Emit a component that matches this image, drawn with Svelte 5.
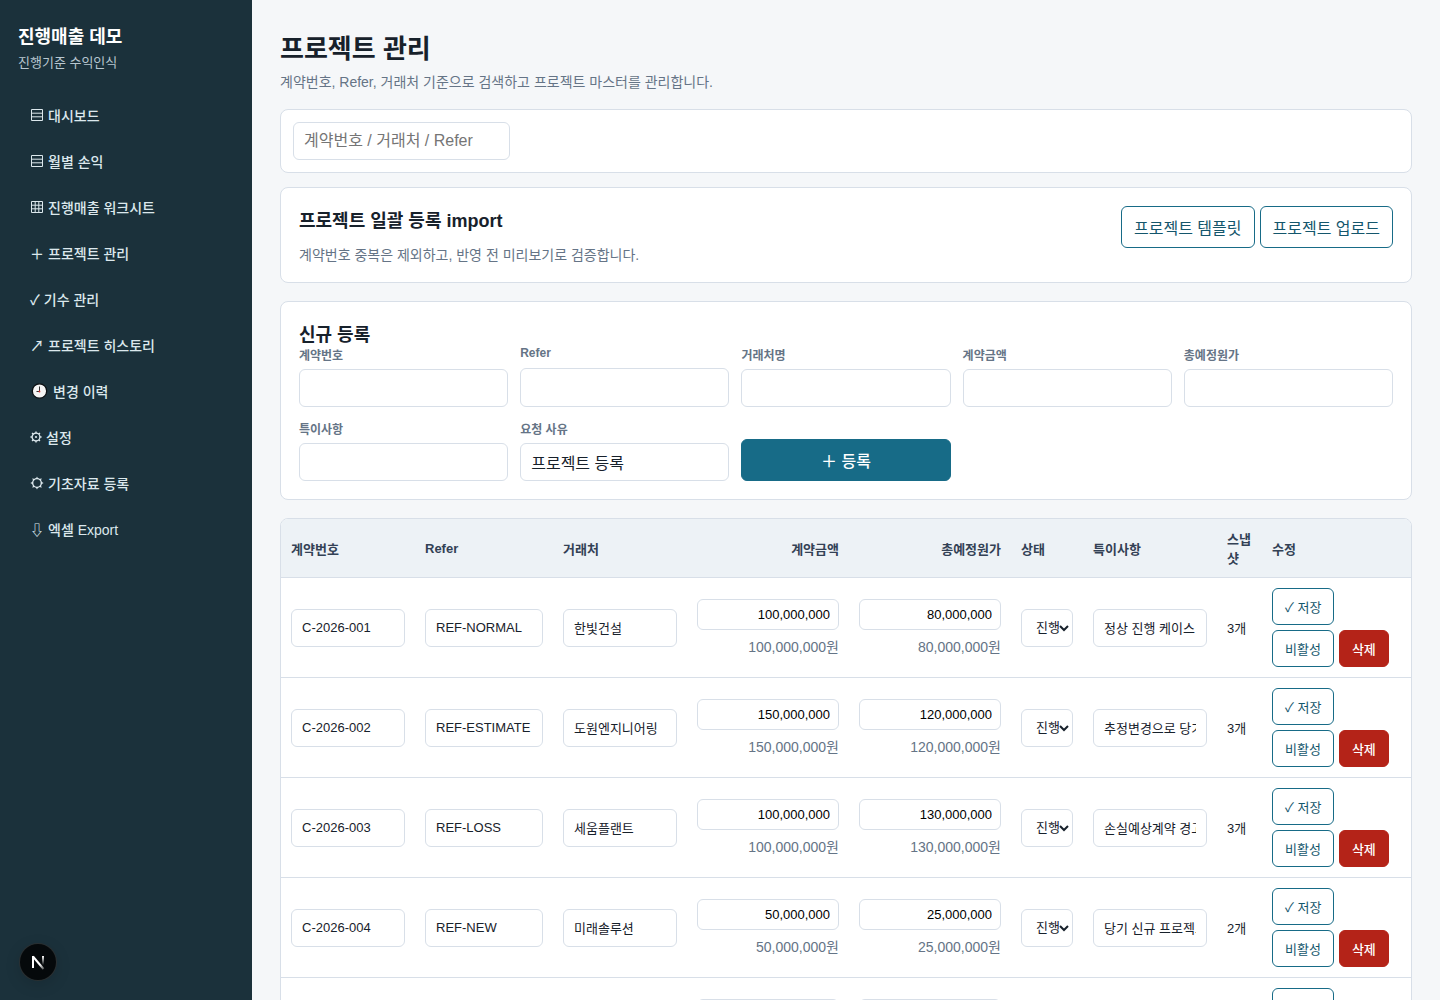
<script>
    const menu = [
        { icon: "list", label: "대시보드" },
        { icon: "list", label: "월별 손익" },
        { icon: "grid", label: "진행매출 워크시트" },
        { icon: "＋", label: "프로젝트 관리" },
        { icon: "✓", label: "기수 관리" },
        { icon: "↗", label: "프로젝트 히스토리" },
        { icon: "clock", label: "변경 이력" },
        { icon: "gear", label: "설정" },
        { icon: "sun", label: "기초자료 등록" },
        { icon: "⇩", label: "엑셀 Export" },
    ];

    const fields = [
        { id: "contractNo", label: "계약번호", value: "" },
        { id: "refer", label: "Refer", value: "" },
        { id: "client", label: "거래처명", value: "" },
        { id: "amount", label: "계약금액", value: "" },
        { id: "cost", label: "총예정원가", value: "" },
        { id: "note", label: "특이사항", value: "" },
        { id: "reason", label: "요청 사유", value: "프로젝트 등록" },
    ];

    const projects = [
        { no: "C-2026-001", refer: "REF-NORMAL", client: "한빛건설", amount: "100,000,000", cost: "80,000,000", note: "정상 진행 케이스", snapshots: 3 },
        { no: "C-2026-002", refer: "REF-ESTIMATE", client: "도원엔지니어링", amount: "150,000,000", cost: "120,000,000", note: "추정변경으로 당기 조정", snapshots: 3 },
        { no: "C-2026-003", refer: "REF-LOSS", client: "세움플랜트", amount: "100,000,000", cost: "130,000,000", note: "손실예상계약 경고", snapshots: 3 },
        { no: "C-2026-004", refer: "REF-NEW", client: "미래솔루션", amount: "50,000,000", cost: "25,000,000", note: "당기 신규 프로젝트", snapshots: 2 },
        { no: "C-2026-005", refer: "REF-DONE", client: "대한테크", amount: "70,000,000", cost: "50,000,000", note: "완료 프로젝트", snapshots: 3 },
    ];

    const spokes = [0, 45, 90, 135, 180, 225, 270, 315];
</script>

<div class="shell">
    <aside>
        <div class="brand">진행매출 데모</div>
        <div class="brand_sub">진행기준 수익인식</div>
        <nav>
            {#each menu as item}
                <a href="#top">
                    {#if item.icon == "list"}
                        <svg width="14" height="14" viewBox="0 0 14 14" fill="none" stroke="currentColor">
                            <path d="M1.5 1.5h11v11h-11z" />
                            <path d="M2 5.2h10M2 8.8h10" />
                        </svg>
                    {:else if item.icon == "grid"}
                        <svg width="14" height="14" viewBox="0 0 14 14" fill="none" stroke="currentColor">
                            <path d="M1.5 1.5h11v11h-11z" />
                            <path d="M2 5.2h10M2 8.8h10M5.2 2v10M8.8 2v10" />
                        </svg>
                    {:else if item.icon == "clock"}
                        <svg width="19" height="16" viewBox="0 0 19 16">
                            <circle cx="9.5" cy="8" r="7.2" fill="#f4f4f4" stroke="#0b0f12" stroke-width="1.3" />
                            <path d="M9.5 3.5V8.5H6.5" fill="none" stroke="#333" stroke-width="1" />
                            <circle cx="9.5" cy="8.5" r="0.9" fill="#d33" />
                        </svg>
                    {:else if item.icon == "gear"}
                        <svg width="12" height="14" viewBox="0 0 12 14" fill="none" stroke="currentColor">
                            <circle cx="6" cy="7" r="3.9" stroke-width="1.3" />
                            <circle cx="6" cy="7" r="1.1" fill="currentColor" stroke="none" />
                            {#each spokes as angle}
                                <path d="M6 3.2V1.4" stroke-width="1.4" transform="rotate({angle} 6 7)" />
                            {/each}
                        </svg>
                    {:else if item.icon == "sun"}
                        <svg width="14" height="14" viewBox="0 0 14 14" fill="none" stroke="currentColor">
                            <circle cx="7" cy="7" r="4.3" stroke-width="1.3" />
                            {#each spokes as angle}
                                <path d="M5.6 3L7 0.4L8.4 3z" fill="currentColor" stroke="none" transform="rotate({angle} 7 7)" />
                            {/each}
                        </svg>
                    {:else}
                        <span>{item.icon}</span>
                    {/if}
                    {item.label}
                </a>
            {/each}
        </nav>
    </aside>

    <main>
        <h1>프로젝트 관리</h1>
        <p class="muted">
            계약번호, Refer, 거래처 기준으로 검색하고 프로젝트 마스터를 관리합니다.
        </p>

        <div class="search">
            <input aria-label="검색" placeholder="계약번호 / 거래처 / Refer" />
        </div>

        <section class="card import">
            <div>
                <h2>프로젝트 일괄 등록 import</h2>
                <p class="muted">
                    계약번호 중복은 제외하고, 반영 전 미리보기로 검증합니다.
                </p>
            </div>
            <div class="actions">
                <button class="secondary">프로젝트 템플릿</button>
                <button class="secondary">프로젝트 업로드</button>
            </div>
        </section>

        <section class="card">
            <h2>신규 등록</h2>
            <form>
                {#each fields as field}
                    <label for={field.id}>
                        {field.label}
                        <input id={field.id} value={field.value} />
                    </label>
                {/each}
                <button class="primary" type="button">＋ 등록</button>
            </form>
        </section>

        <div class="table_wrap">
            <table>
                <colgroup>
                    <col class="col_text" />
                    <col class="col_refer" />
                    <col class="col_text" />
                    <col class="col_money" />
                    <col class="col_money" />
                    <col class="col_status" />
                    <col class="col_text" />
                    <col class="col_count" />
                    <col />
                </colgroup>
                <thead>
                    <tr>
                        <th>계약번호</th>
                        <th>Refer</th>
                        <th>거래처</th>
                        <th class="num">계약금액</th>
                        <th class="num">총예정원가</th>
                        <th>상태</th>
                        <th>특이사항</th>
                        <th>스냅샷</th>
                        <th>수정</th>
                    </tr>
                </thead>
                <tbody>
                    {#each projects as project}
                        <tr>
                            <td><input aria-label="계약번호" value={project.no} /></td>
                            <td><input aria-label="Refer" value={project.refer} /></td>
                            <td><input aria-label="거래처" value={project.client} /></td>
                            <td class="num">
                                <input class="money" aria-label="계약금액" value={project.amount} />
                                <div class="won">{project.amount}원</div>
                            </td>
                            <td class="num">
                                <input class="money" aria-label="총예정원가" value={project.cost} />
                                <div class="won">{project.cost}원</div>
                            </td>
                            <td>
                                <select aria-label="상태">
                                    <option>진행</option>
                                    <option>완료</option>
                                </select>
                            </td>
                            <td><input aria-label="특이사항" value={project.note} /></td>
                            <td>{project.snapshots}개</td>
                            <td>
                                <div class="row_actions">
                                    <button class="secondary">✓ 저장</button>
                                    <button class="secondary">비활성</button>
                                    <button class="danger">삭제</button>
                                </div>
                            </td>
                        </tr>
                    {/each}
                </tbody>
            </table>
        </div>
    </main>
</div>

<button class="dev_badge" aria-label="개발 도구">
    <svg width="36" height="36" viewBox="0 0 36 36" fill="none">
        <defs>
            <linearGradient id="diag" x1="17" y1="17" x2="24" y2="26" gradientUnits="userSpaceOnUse">
                <stop offset="0.4" stop-color="#fff" />
                <stop offset="1" stop-color="#fff" stop-opacity="0.2" />
            </linearGradient>
            <linearGradient id="stem" x1="23" y1="12" x2="23" y2="21" gradientUnits="userSpaceOnUse">
                <stop stop-color="#fff" />
                <stop offset="1" stop-color="#fff" stop-opacity="0" />
            </linearGradient>
        </defs>
        <path d="M13 12.5L23.5 25" stroke="url(#diag)" stroke-width="2" />
        <path d="M13 24V12" stroke="#fff" stroke-width="2" />
        <path d="M23 12V21" stroke="url(#stem)" stroke-width="2" />
    </svg>
</button>

<style>
    :global(body) {
        background: #f5f7f9;
        color: #17212b;
        font-family: "Liberation Sans", "Noto Sans CJK KR", sans-serif;
    }

    * {
        box-sizing: border-box;
    }

    .shell {
        display: grid;
        grid-template-columns: 252px 1fr;
        min-height: 100vh;
    }

    aside {
        background: #1b313b;
        color: white;
        padding: 22px 18px;
    }

    .brand {
        font-size: 18px;
        font-weight: 700;
    }

    .brand_sub {
        color: #b8c7d0;
        font-size: 13px;
        margin-top: 4px;
    }

    nav {
        display: grid;
        gap: 6px;
        margin-top: 24px;
    }

    nav a {
        display: flex;
        align-items: center;
        gap: 4px;
        height: 40px;
        padding: 0 12px;
        border-radius: 6px;
        color: #dce8ed;
        font-size: 14px;
        font-weight: 500;
        text-decoration: none;
    }

    main {
        padding: 28px;
        min-width: 0;
    }

    h1 {
        font-size: 26px;
        margin: 0 0 6px;
    }

    h2 {
        font-size: 18px;
        margin: 0;
    }

    .muted {
        color: #657486;
        font-size: 14px;
        margin: 0;
    }

    .search,
    .card,
    .table_wrap {
        background: white;
        border: 1px solid #d8dfe8;
        border-radius: 8px;
    }

    .search {
        padding: 12px;
        margin: 18px 0 14px;
    }

    .search input {
        width: 217px;
    }

    .card {
        padding: 18px;
        margin-bottom: 18px;
    }

    .import {
        display: flex;
        justify-content: space-between;
        align-items: flex-start;
    }

    .import .muted {
        margin-top: 12px;
    }

    .actions {
        display: flex;
        gap: 5px;
    }

    form {
        display: grid;
        grid-template-columns: repeat(5, 1fr);
        gap: 13px 12px;
    }

    label {
        display: grid;
        gap: 6px;
        color: #657486;
        font-size: 12px;
        font-weight: 700;
    }

    input,
    select {
        width: 100%;
        min-height: 38px;
        padding: 0 10px;
        border: 1px solid #d8dfe8;
        border-radius: 6px;
        background: white;
        color: #17212b;
        font-family: inherit;
        font-size: 16px;
    }

    select {
        appearance: none;
        padding: 0 0 0 14px;
        background: white
            url("data:image/svg+xml,%3Csvg xmlns='http://www.w3.org/2000/svg' width='10' height='8'%3E%3Cpath d='M1 2l4 4 4-4' fill='none' stroke='%2317212b' stroke-width='2'/%3E%3C/svg%3E")
            no-repeat right 3px center;
    }

    button {
        padding: 0 12px;
        border: 1px solid #176b87;
        border-radius: 6px;
        font-family: inherit;
        font-size: 16px;
        height: 42px;
        cursor: pointer;
    }

    .primary {
        align-self: end;
        background: #176b87;
        color: white;
        font-weight: 500;
    }

    .secondary {
        background: white;
        color: #14566c;
    }

    .danger {
        background: #b42318;
        border-color: #b42318;
        color: white;
        font-weight: 500;
    }

    .table_wrap {
        overflow-x: auto;
    }

    table {
        width: 100%;
        min-width: 1130px;
        table-layout: fixed;
        border-collapse: separate;
        border-spacing: 0;
        font-size: 13px;
    }

    .col_text {
        width: 134px;
    }

    .col_refer {
        width: 138px;
    }

    .col_money {
        width: 162px;
    }

    .col_status {
        width: 72px;
    }

    .col_count {
        width: 45px;
    }

    th,
    td {
        padding: 10px;
        border-bottom: 1px solid #d8dfe8;
        text-align: left;
        vertical-align: middle;
    }

    th {
        background: #edf2f6;
        color: #334155;
    }

    .num {
        text-align: right;
    }

    td input,
    td select,
    td button {
        font-size: 13px;
    }

    .money {
        min-height: 31px;
        padding: 0 8px;
        color: black;
        text-align: right;
    }

    .won {
        margin-top: 6px;
        color: #657486;
        font-size: 14px;
    }

    .row_actions {
        display: flex;
        flex-wrap: wrap;
        gap: 5px;
    }

    .row_actions button {
        height: 37px;
    }

    .dev_badge {
        position: fixed;
        left: 20px;
        bottom: 20px;
        width: 36px;
        height: 36px;
        padding: 0;
        border: 0;
        border-radius: 50%;
        background: #05090b;
        box-shadow: 0 0 0 1px #2a2f31, 0 4px 16px rgba(0, 0, 0, 0.15);
    }
</style>
